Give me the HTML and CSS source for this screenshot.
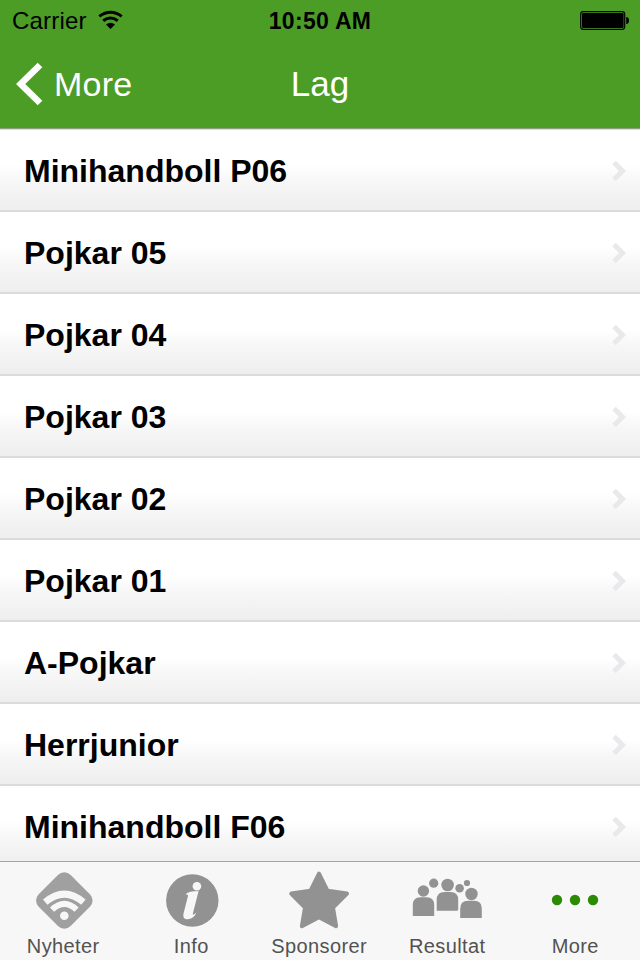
FILE: index.html
```html
<!DOCTYPE html>
<html lang="sv">
<head>
<meta charset="utf-8">
<title>Lag</title>
<link rel="stylesheet" href="styles.css">
</head>
<body>
<div class="screen">
  <header class="top">
    <div class="status">
      <div class="carrier"><span class="carrier-name">Carrier</span>
        <svg class="wifi" width="26" height="20" viewBox="97 10 26 20"><g fill="none" stroke="#000" stroke-width="3"><path d="M99.3 16.4Q110.5 8.2 121.7 16.4"/><path d="M103.2 20.8Q110.5 15.2 117.8 20.8"/></g><path d="M106 24.6Q110.5 20.8 115 24.6L110.5 29Z"/></svg>
      </div>
      <span class="time">10:50 AM</span>
      <svg class="battery" width="50" height="20" viewBox="580 10 50 20"><rect x="580.7" y="11.7" width="44" height="17.6" rx="2.5" fill="none" stroke="#000" stroke-width="1.2"/><rect x="582" y="13" width="41.6" height="15" rx="1.2"/><path d="M626.2 17Q629 17.2 629 20.5T626.2 24Z"/></svg>
    </div>
    <nav class="navbar">
      <a class="back"><svg width="28" height="44" viewBox="16 62 28 44"><path d="M40 65L20.7 84L40 103" fill="none" stroke="#fff" stroke-width="6.6"/></svg><span class="back-label">More</span></a>
      <h1 class="title">Lag</h1>
      <span></span>
    </nav>
  </header>
  <ul class="list">
    <li class="row"><span>Minihandboll P06</span><svg class="chevron" width="16" height="22"><path d="M3 2.5L11.5 11L3 19.5"/></svg></li>
    <li class="row"><span>Pojkar 05</span><svg class="chevron" width="16" height="22"><path d="M3 2.5L11.5 11L3 19.5"/></svg></li>
    <li class="row"><span>Pojkar 04</span><svg class="chevron" width="16" height="22"><path d="M3 2.5L11.5 11L3 19.5"/></svg></li>
    <li class="row"><span>Pojkar 03</span><svg class="chevron" width="16" height="22"><path d="M3 2.5L11.5 11L3 19.5"/></svg></li>
    <li class="row"><span>Pojkar 02</span><svg class="chevron" width="16" height="22"><path d="M3 2.5L11.5 11L3 19.5"/></svg></li>
    <li class="row"><span>Pojkar 01</span><svg class="chevron" width="16" height="22"><path d="M3 2.5L11.5 11L3 19.5"/></svg></li>
    <li class="row"><span>A-Pojkar</span><svg class="chevron" width="16" height="22"><path d="M3 2.5L11.5 11L3 19.5"/></svg></li>
    <li class="row"><span>Herrjunior</span><svg class="chevron" width="16" height="22"><path d="M3 2.5L11.5 11L3 19.5"/></svg></li>
    <li class="row"><span>Minihandboll F06</span><svg class="chevron" width="16" height="22"><path d="M3 2.5L11.5 11L3 19.5"/></svg></li>
  </ul>
  <nav class="tabs">
    <a class="tab">
      <svg class="icon" viewBox="0 862 128 72"><rect x="41.7" y="877.9" width="45.2" height="45.2" rx="9" fill="#a0a0a0" transform="rotate(45 64.3 900.5)"/><g fill="none" stroke="#f7f7f7"><path stroke-width="6.8" d="M45.2 902.2Q64.3 886 83.4 902.2"/><path stroke-width="6" d="M52 909.6Q64.3 898 76.6 909.6"/></g><circle cx="64.3" cy="915.8" r="4.3" fill="#f7f7f7"/></svg>
      <span>Nyheter</span>
    </a>
    <a class="tab">
      <svg class="icon" viewBox="128 862 128 72"><circle cx="192.3" cy="900.5" r="26.2"/><g fill="#f7f7f7"><circle cx="196.9" cy="886.3" r="4.3"/><path d="M185.6 894.6C188 891.6 192 891.5 198.6 891L193 913C192.4 915.6 193.6 915.2 196.2 912.6C195 917 191 919.2 187.4 919.2C183.6 919.2 182.8 916.5 183.6 913.2L187.8 896.7C188.4 894.6 187.6 894 185.6 894.6Z"/></g></svg>
      <span>Info</span>
    </a>
    <a class="tab">
      <svg class="icon" viewBox="256 862 128 72"><path stroke="#929292" stroke-width="4" stroke-linejoin="round" d="M319 873.7L327.6 890.8L347 893.6L333 907.6L336.1 926.2L319 917.2L301.9 926.2L305 907.6L291.2 893.6L310.4 890.8Z"/></svg>
      <span>Sponsorer</span>
    </a>
    <a class="tab">
      <svg class="icon" viewBox="384 862 128 72"><circle cx="423.4" cy="891" r="5.7"/><path d="M412.8 916V905Q412.8 897.2 420.5 897.2H426.5Q434.2 897.2 434.2 905V916Z"/><circle cx="433.7" cy="883.2" r="4.6"/><circle cx="447.6" cy="885" r="6.3"/><path d="M436.7 910.8V900Q436.7 892 444.5 892H450.5Q458.2 892 458.2 900V909.3Q458.2 910.8 456.7 910.8Z"/><circle cx="459.6" cy="888.3" r="4.3"/><circle cx="467" cy="883" r="3.1"/><circle cx="471.5" cy="894" r="7" fill="#f7f7f7"/><circle cx="471.5" cy="894" r="6.2"/><path d="M460.2 918V908.8Q460.2 900.8 468 900.8H474.2Q481.8 900.8 481.8 908.8V918Z"/></svg>
      <span>Resultat</span>
    </a>
    <a class="tab">
      <svg class="icon more" viewBox="512 862 128 72"><circle cx="557" cy="900" r="5.2"/><circle cx="575" cy="900" r="5.2"/><circle cx="593" cy="900" r="5.2"/></svg>
      <span>More</span>
    </a>
  </nav>
</div>
</body>
</html>
```
FILE: styles.css
```css
* { box-sizing: border-box; }
body { margin: 0; font-family: "Liberation Sans", Arial, sans-serif; }
.screen { width: 640px; height: 960px; display: flex; flex-direction: column; overflow: hidden; background: #fff; }
svg { display: block; flex: none; }
.top { height: 130px; flex: none; background: #4b9d26; border-bottom: 1px solid #dedede; box-shadow: inset 0 -1px #8c9f82; }
.status { height: 40px; display: grid; grid-template-columns: 1fr auto 1fr; padding: 0 10px 0 12px; line-height: 42px; font-size: 24px; }
.carrier { display: flex; gap: 10px; }
.carrier-name { letter-spacing: 0.2px; }
.wifi, .battery { margin-top: 10px; }
.battery { justify-self: end; }
.time { font-weight: bold; font-size: 23px; letter-spacing: 0.3px; margin-left: -2px; }
.navbar { height: 88px; display: grid; grid-template-columns: 1fr auto 1fr; color: #fff; font-size: 34px; line-height: 88px; }
.back { display: flex; gap: 10px; padding-left: 16px; }
.back svg { margin-top: 22px; }
.back-label { letter-spacing: 0.2px; }
.title { margin: 0; font-size: 35px; font-weight: normal; }
.list { list-style: none; margin: 0; padding: 0; height: 731px; flex: none; overflow: hidden; }
.row { height: 82px; display: flex; align-items: center; justify-content: space-between; padding: 2px 13px 0 24px; border-bottom: 2px solid #dbdbdb; background: linear-gradient(#fff 0, #fff 44%, #f7f7f7 64%, #eee 100%); font-size: 32px; font-weight: bold; color: #000; }
.chevron { fill: none; stroke: #e9e9ec; stroke-width: 5; }
.tabs { height: 99px; flex: none; display: grid; grid-template-columns: repeat(5, 1fr); border-top: 1px solid #a2a5a2; background: #f7f7f7; }
.tab { display: flex; flex-direction: column; align-items: center; color: #525252; font-size: 20px; line-height: 24px; letter-spacing: 0.4px; }
.tab span { margin-right: 1.5px; }
.icon { width: 128px; height: 72px; fill: #929292; }
.more { fill: #2b8c04; }
```
